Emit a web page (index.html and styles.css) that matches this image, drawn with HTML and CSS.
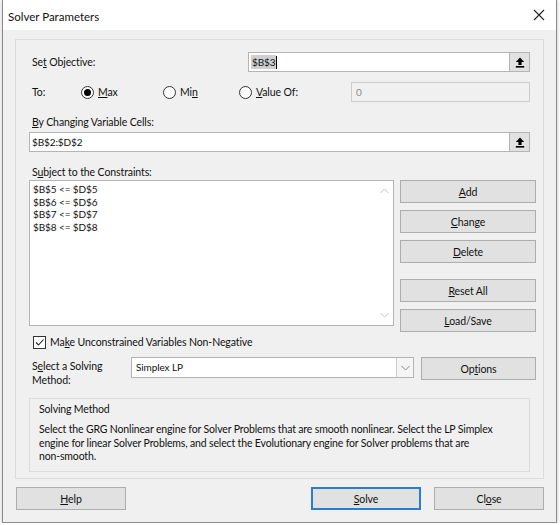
FILE: index.html
```html
<!DOCTYPE html>
<html lang="en">
<head>
  <meta charset="UTF-8" />
  <title>Solver Parameters</title>
  <link rel="stylesheet" href="styles.css">
</head>
<body>

  <div class="dialog">
    <!-- Title bar -->
    <div class="titlebar">
      <span class="title">Solver Parameters</span>
      <span class="close">
        <svg width="12" height="12" viewBox="0 0 12 12"><path d="M1 1 L11 11 M11 1 L1 11" stroke="#222" stroke-width="1.1" fill="none"/></svg>
      </span>
    </div>

    <div class="body">
      <div class="panel">

        <div class="row objective-row">
          <span class="lbl obj-lbl">Se<u>t</u> Objective:</span>
          <div class="refbox">
            <span class="field"><span class="sel">$B$3</span><span class="caret"></span></span>
            <span class="ref-btn">
              <svg width="10" height="11" viewBox="0 0 10 11"><path d="M5 0.5 L9.2 5 H6.6 V8 H3.4 V5 H0.8 Z" fill="#000"/><rect x="0.8" y="9" width="8.4" height="1.6" fill="#000"/></svg>
            </span>
          </div>
        </div>

        <div class="row to-row">
          <span class="lbl to-lbl">To:</span>
          <span class="radio radio-max"><i class="dot checked"></i><span><u>M</u>ax</span></span>
          <span class="radio radio-min"><i class="dot"></i><span>Mi<u>n</u></span></span>
          <span class="radio radio-val"><i class="dot"></i><span><u>V</u>alue Of:</span></span>
          <div class="value-box">0</div>
        </div>

        <div class="caption cells-cap"><u>B</u>y Changing Variable Cells:</div>
        <div class="refbox">
          <span class="field">$B$2:$D$2</span>
          <span class="ref-btn">
            <svg width="10" height="11" viewBox="0 0 10 11"><path d="M5 0.5 L9.2 5 H6.6 V8 H3.4 V5 H0.8 Z" fill="#000"/><rect x="0.8" y="9" width="8.4" height="1.6" fill="#000"/></svg>
          </span>
        </div>

        <div class="caption subj-cap">S<u>u</u>bject to the Constraints:</div>
        <div class="constraints">
          <div class="listbox">
            <div class="items">
              <div>$B$5 &lt;= $D$5</div>
              <div>$B$6 &lt;= $D$6</div>
              <div>$B$7 &lt;= $D$7</div>
              <div>$B$8 &lt;= $D$8</div>
            </div>
            <div class="scroll">
              <svg width="9" height="6" viewBox="0 0 9 6"><path d="M0.5 5 L4.5 1 L8.5 5" stroke="#c2c2c2" fill="none"/></svg>
              <svg width="9" height="6" viewBox="0 0 9 6"><path d="M0.5 1 L4.5 5 L8.5 1" stroke="#c2c2c2" fill="none"/></svg>
            </div>
          </div>
          <div class="side-btns">
            <button class="btn"><u>A</u>dd</button>
            <button class="btn"><u>C</u>hange</button>
            <button class="btn"><u>D</u>elete</button>
            <button class="btn btn-reset"><u>R</u>eset All</button>
            <button class="btn"><u>L</u>oad/Save</button>
          </div>
        </div>

        <div class="check-row">
          <span class="checkbox">
            <svg width="11" height="11" viewBox="0 0 11 11"><path d="M2 5.5 L4.5 8 L9.5 2.5" stroke="#222" stroke-width="1.1" fill="none"/></svg>
          </span>
          <span>Ma<u>k</u>e Unconstrained Variables Non-Negative</span>
        </div>

        <div class="method-row">
          <span class="lbl method-lbl">S<u>e</u>lect a Solving<br>Method:</span>
          <div class="select">
            <span class="select-text">Simplex LP</span>
            <span class="select-arrow">
              <svg width="9" height="6" viewBox="0 0 9 6"><path d="M0.5 1 L4.5 5 L8.5 1" stroke="#888" fill="none"/></svg>
            </span>
          </div>
          <button class="btn btn-options">Op<u>t</u>ions</button>
        </div>

        <div class="group">
          <div class="group-title">Solving Method</div>
          <p class="group-text">Select the GRG Nonlinear engine for Solver Problems that are smooth nonlinear. Select the LP Simplex engine for linear Solver Problems, and select the Evolutionary engine for Solver problems that are <span class="nowrap">non-smooth.</span></p>
        </div>

      </div>

      <div class="footer">
        <button class="btn foot-btn"><u>H</u>elp</button>
        <span class="spacer"></span>
        <button class="btn foot-btn btn-default"><u>S</u>olve</button>
        <button class="btn foot-btn">Cl<u>o</u>se</button>
      </div>
    </div>
  </div>

</body>
</html>
```

FILE: styles.css
```css
body {
  margin: 0;
  padding: 0;
  background: #fff;
  font-family: Lato, 'Noto Sans', sans-serif;
  font-size: 10.5px;
  letter-spacing: -0.1px;
  color: #111;
}
.dialog {
  margin-left: 2px;
  width: 555px;
  height: 523px;
  box-sizing: border-box;
  border: 1px solid #8c8c8c;
  border-top: none;
  background: #f0f0f0;
  box-shadow: 0 0 4px rgba(0,0,0,0.25);
}
.titlebar {
  height: 30px;
  background: #fff;
  display: flex;
  align-items: center;
  justify-content: space-between;
  padding: 0 8px 0 5px;
}
.title {
  font-size: 11.5px;
  letter-spacing: 0;
  padding-top: 2px;
}
.close {
  display: flex;
  width: 12px;
  height: 12px;
  margin-right: 3px;
}
.body {
  padding: 9px 12px 0 12px;
}
.panel {
  box-sizing: border-box;
  height: 440px;
  border: 1px solid #dcdcdc;
  padding: 12px 13px 0 13px;
}
.row {
  display: flex;
  align-items: center;
  height: 20px;
}
.lbl {
  padding-left: 3px;
  box-sizing: border-box;
}
.obj-lbl {
  width: 219px;
}
.refbox {
  flex: 1;
  display: flex;
  height: 20px;
  box-sizing: border-box;
  border: 1px solid #b4b4b4;
  background: #fff;
}
.field {
  flex: 1;
  display: flex;
  align-items: center;
  padding-left: 2px;
  font-size: 10px;
}
.sel {
  background: #cfcfcf;
  padding: 0 1px;
  line-height: 14px;
}
.caret {
  width: 1px;
  height: 13px;
  background: #000;
}
.ref-btn {
  width: 19px;
  background: #e1e1e1;
  border-left: 1px solid #b4b4b4;
  display: flex;
  align-items: center;
  justify-content: center;
}
.to-row {
  margin-top: 10px;
}
.to-lbl {
  width: 52px;
}
.radio {
  display: flex;
  align-items: center;
  gap: 4px;
}
.radio-max {
  width: 82px;
}
.radio-min {
  width: 76px;
}
.radio-val {
  width: 112px;
}
.dot {
  width: 13px;
  height: 13px;
  box-sizing: border-box;
  border: 1px solid #333;
  border-radius: 50%;
  background: #fff;
  display: flex;
  align-items: center;
  justify-content: center;
}
.dot.checked::after {
  content: '';
  width: 7px;
  height: 7px;
  border-radius: 50%;
  background: #000;
}
.value-box {
  flex: 1;
  height: 20px;
  box-sizing: border-box;
  border: 1px solid #cccccc;
  background: #f0f0f0;
  color: #8a8a8a;
  font-size: 10px;
  line-height: 18px;
  padding-left: 4px;
}
.caption {
  padding-left: 3px;
  line-height: 16px;
}
.cells-cap {
  margin-top: 12px;
  margin-bottom: 2px;
}
.subj-cap {
  margin-top: 12px;
}
.constraints {
  display: flex;
  align-items: flex-start;
  height: 152px;
  margin-right: -6px;
}
.listbox {
  width: 365px;
  height: 146px;
  box-sizing: border-box;
  border: 1px solid #b4b4b4;
  background: #fff;
  display: flex;
}
.items {
  flex: 1;
  padding: 2px 0 0 3px;
  font-size: 10px;
  line-height: 12.7px;
}
.scroll {
  width: 17px;
  display: flex;
  flex-direction: column;
  justify-content: space-between;
  align-items: center;
  padding: 7px 0 7px 0;
}
.side-btns {
  margin-left: 6px;
  flex: 1;
  display: flex;
  flex-direction: column;
  gap: 7px;
}
.btn {
  font-family: inherit;
  font-size: 10.5px;
  letter-spacing: -0.1px;
  color: #111;
  height: 23px;
  padding: 0;
  box-sizing: border-box;
  background: #e1e1e1;
  border: 1px solid #adadad;
  border-radius: 0;
}
.btn-reset {
  margin-top: 9px;
}
.check-row {
  display: flex;
  align-items: center;
  gap: 4px;
  padding-left: 4px;
  margin-top: 2px;
  height: 16px;
}
.checkbox {
  width: 13px;
  height: 13px;
  box-sizing: border-box;
  border: 1px solid #333;
  background: #fff;
  display: flex;
  align-items: center;
  justify-content: center;
}
.method-row {
  display: flex;
  align-items: flex-start;
  margin-top: 7px;
  height: 30px;
  margin-right: -6px;
}
.method-lbl {
  width: 102px;
  padding-top: 2px;
  line-height: 14px;
}
.select {
  width: 283px;
  height: 21px;
  box-sizing: border-box;
  border: 1px solid #b4b4b4;
  background: #fff;
  display: flex;
}
.select-text {
  flex: 1;
  padding-left: 4px;
  line-height: 19px;
  font-size: 10px;
}
.select-arrow {
  width: 16px;
  border-left: 1px solid #cfcfcf;
  background: #f5f5f5;
  display: flex;
  align-items: center;
  justify-content: center;
}
.btn-options {
  margin-left: 7px;
  flex: 1;
}
.group {
  margin-top: 11px;
  height: 74px;
  box-sizing: border-box;
  border: 1px solid #dcdcdc;
  padding: 2px 9px 0 9px;
  letter-spacing: -0.15px;
}
.group-title {
  line-height: 16px;
}
.group-text {
  margin: 6px 0 0 0;
  line-height: 13.5px;
}
.nowrap {
  white-space: nowrap;
}
.footer {
  display: flex;
  margin-top: 8px;
  padding-left: 1px;
  gap: 13px;
}
.spacer {
  flex: 1;
}
.foot-btn {
  width: 110px;
}
.btn-default {
  border: 2px solid #2b7cd3;
}
```
